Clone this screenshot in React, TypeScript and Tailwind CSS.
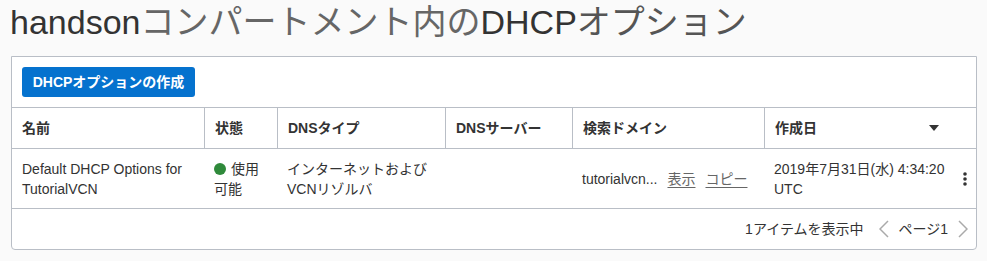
import React from "react";

const font = { fontFamily: '"Liberation Sans", "Noto Sans CJK JP", sans-serif' };

const headers = ["名前", "状態", "DNSタイプ", "DNSサーバー", "検索ドメイン", "作成日"];

export default function App() {
  return (
    <div className="w-[987px] h-[261px] bg-[#fafafa] text-[#333]" style={font}>
      <h1 className="h-[56px] pl-[10px] pt-[2px] text-[34px] leading-[40px] text-[#333] font-normal">
        handson<span className="text-[#666]">コンパートメント内の</span>DHCP
        <span className="text-[#555]">オプション</span>
      </h1>

      <div className="ml-[11px] mr-[10px] bg-white border border-[#b9bec6] rounded-b-[4px]">
        {/* toolbar */}
        <div className="h-[50px] pl-[10px] pt-[10px]">
          <button className="h-[30px] w-[173px] rounded-[3px] bg-[#0572ce] text-white text-[14px] font-bold">
            DHCPオプションの作成
          </button>
        </div>

        {/* header */}
        <div className="grid grid-cols-[192px_73px_168px_127px_192px_211px] h-[42px] border-t border-b border-[#b9bec6] text-[14px] font-bold">
          {headers.map((h, i) => (
            <div
              key={h}
              className={
                "flex items-center px-[10px] " + (i > 0 ? "border-l border-[#b9bec6]" : "")
              }
            >
              {h}
              {i === 5 && (
                <svg className="ml-auto mr-[26px]" width="10" height="6" viewBox="0 0 10 6">
                  <path d="M0 0h10L5 6z" fill="#333" />
                </svg>
              )}
            </div>
          ))}
        </div>

        {/* row */}
        <div className="grid grid-cols-[192px_73px_168px_127px_192px_211px] h-[60px] border-b border-[#b9bec6] text-[14px] leading-[20px] text-[#333] items-center">
          <div className="px-[10px]">
            Default DHCP Options for
            <br />
            TutorialVCN
          </div>
          <div className="pl-[10px] pr-[6px]">
            <span className="inline-block w-[12px] h-[12px] rounded-full bg-[#2f8a3b] align-[-1px] mr-[5px]" />
            使用可能
          </div>
          <div className="px-[10px]">
            インターネットおよび
            <br />
            VCNリゾルバ
          </div>
          <div />
          <div className="px-[10px] flex items-center gap-[10px]">
            <span>tutorialvcn...</span>
            <span className="text-[#666] underline underline-offset-[3px]">表示</span>
            <span className="text-[#666] underline underline-offset-[3px]">コピー</span>
          </div>
          <div className="pl-[10px] pr-[8px] flex items-center">
            <div>
              2019年7月31日(水) 4:34:20
              <br />
              UTC
            </div>
            <svg className="ml-auto" width="4" height="14" viewBox="0 0 4 14">
              <circle cx="2" cy="2" r="1.8" fill="#333" />
              <circle cx="2" cy="7" r="1.8" fill="#333" />
              <circle cx="2" cy="12" r="1.8" fill="#333" />
            </svg>
          </div>
        </div>

        {/* footer */}
        <div className="h-[40px] flex items-center justify-end pr-[8px] text-[14px] text-[#333]">
          <span>1アイテムを表示中</span>
          <svg className="ml-[16px]" width="10" height="18" viewBox="0 0 10 18">
            <path d="M9 1L1 9l8 8" fill="none" stroke="#aaa" strokeWidth="1.5" />
          </svg>
          <span className="ml-[9px]">ページ1</span>
          <svg className="ml-[10px]" width="10" height="18" viewBox="0 0 10 18">
            <path d="M1 1l8 8-8 8" fill="none" stroke="#aaa" strokeWidth="1.5" />
          </svg>
        </div>
      </div>
    </div>
  );
}
